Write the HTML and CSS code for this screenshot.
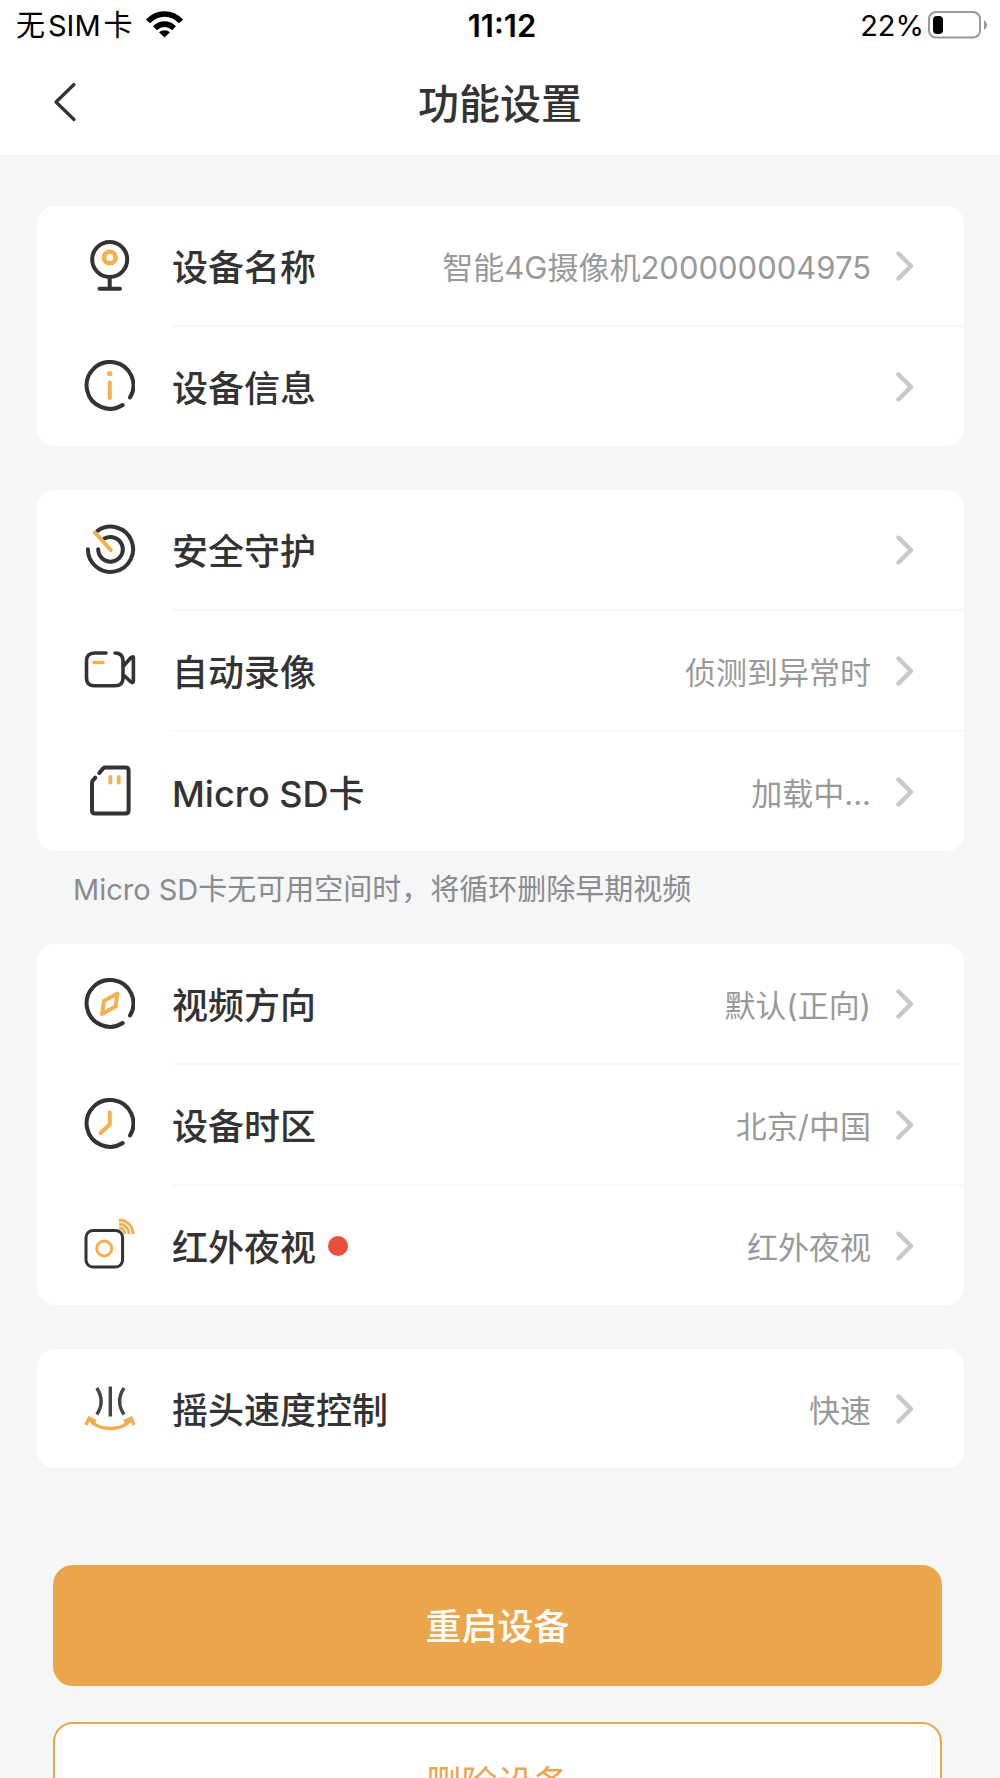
FILE: index.html
```html
<!DOCTYPE html>
<html lang="zh-CN">
<head>
<meta charset="utf-8">
<meta name="viewport" content="width=device-width, initial-scale=1">
<title>功能设置</title>
<link rel="stylesheet" href="styles.css">
</head>
<body>
<svg class="sprite" aria-hidden="true">
  <symbol id="chevron" viewBox="0 0 18 30"><path d="M2.5 2.5 15 15 2.5 27.5" fill="none" stroke="#c8c8c8" stroke-width="4.4" stroke-linecap="round" stroke-linejoin="round"/></symbol>
  <symbol id="open-ring" viewBox="0 0 51 51"><path d="M46 37.5A23.4 23.4 0 1 0 38.7 45" fill="none" stroke="#333" stroke-width="4" stroke-linecap="round"/></symbol>
</svg>
<div class="app">
  <header class="top">
    <div class="status">
      <div class="status-left">
        <span class="carrier"><span>无</span><span>SIM</span><span>卡</span></span>
        <svg class="wifi" viewBox="0 0 37 28" aria-hidden="true">
          <path d="M2 11.500C11 1.500 26 1.500 35 11.500M9 18.200C14.500 12.800 22.500 12.800 28 18.200" fill="none" stroke="#000" stroke-width="5.600"/>
          <path d="M13 22.200C16 19.500 21 19.500 24 22.200L18.500 27.600Z"/>
        </svg>
      </div>
      <time class="clock">11:12</time>
      <div class="status-right">
        <span>22%</span>
        <svg class="battery" viewBox="0 0 60 28" aria-hidden="true">
          <rect x="1" y="1" width="51" height="25.500" rx="7" fill="none" stroke="#999" stroke-width="2"/>
          <rect x="5" y="5" width="10" height="18" rx="4"/>
          <path d="M56 9Q59 11 59 14T56 19Z" fill="#999"/>
        </svg>
      </div>
    </div>
    <div class="nav">
      <button class="back" type="button" aria-label="返回">
        <svg viewBox="0 0 24 40" aria-hidden="true"><path d="M21 2.500 3 20 21 37.500" fill="none" stroke="#333" stroke-width="3.200" stroke-linecap="round" stroke-linejoin="round"/></svg>
      </button>
      <h1 class="title">功能设置</h1>
    </div>
  </header>

  <main class="content">
    <ul class="card">
      <li><a class="row" href="#name">
        <svg class="icon" viewBox="0 0 51 51" fill="none" stroke="#333" stroke-width="4" stroke-linecap="round"><circle cx="25.700" cy="19.500" r="17.500"/><path d="M25.700 37V48M15.500 48.700H36"/><circle cx="25.700" cy="17.500" r="5.800" stroke="#f5b04c" stroke-width="4.400"/></svg>
        <span class="cell"><span class="label">设备名称</span><span class="value">智能4G摄像机200000004975</span><svg class="chevron"><use href="#chevron"/></svg></span>
      </a></li>
      <li><a class="row" href="#info">
        <svg class="icon" viewBox="0 0 51 51"><use href="#open-ring"/><circle cx="25.800" cy="13.600" r="2.700" fill="#f5b04c"/><path d="M25.800 22.500V38" stroke="#f5b04c" stroke-width="4" stroke-linecap="round"/></svg>
        <span class="cell"><span class="label">设备信息</span><svg class="chevron"><use href="#chevron"/></svg></span>
      </a></li>
    </ul>

    <ul class="card">
      <li><a class="row" href="#guard">
        <svg class="icon" viewBox="0 0 51 51" fill="none" stroke="#333" stroke-width="4" stroke-linecap="round"><path d="M3.900 25.300A22.600 22.600 0 1 0 13.500 6.800M14.200 25.300A12.300 12.300 0 1 0 20.500 14.600"/><path d="M10.800 8.500 26.800 26" stroke="#f5b04c"/></svg>
        <span class="cell"><span class="label">安全守护</span><svg class="chevron"><use href="#chevron"/></svg></span>
      </a></li>
      <li><a class="row" href="#record">
        <svg class="icon" viewBox="0 0 51 51" fill="none" stroke="#333" stroke-width="3.600" stroke-linecap="round" stroke-linejoin="round"><path d="M22 9H10.500Q2.500 9 2.500 17V34Q2.500 41.800 10.500 41.800H31Q39 41.800 39 34V17Q39 9 31 9M40 21.500 46.500 14Q49.400 11.500 49.400 14V37Q49.400 39.500 46.500 37.500L40 31.500"/><path d="M10 18.500H19" stroke="#f5b04c" stroke-width="3.600"/></svg>
        <span class="cell"><span class="label">自动录像</span><span class="value">侦测到异常时</span><svg class="chevron"><use href="#chevron"/></svg></span>
      </a></li>
      <li><a class="row" href="#sd">
        <svg class="icon" viewBox="0 0 51 51" fill="none" stroke="#333" stroke-width="4" stroke-linecap="round" stroke-linejoin="round"><path d="M15.300 8 19 3.400Q20 2.500 21.500 2.500H41.500Q44.600 2.500 44.600 5.500V45.500Q44.600 48.600 41.500 48.600H11Q8 48.600 8 45.500V18Q8 16.500 9 15.300L11.300 12.700"/><path d="M26.300 12V17.500M34.700 12V17.500" stroke="#f5b04c" stroke-width="3.800"/></svg>
        <span class="cell"><span class="label">Micro SD卡</span><span class="value">加载中...</span><svg class="chevron"><use href="#chevron"/></svg></span>
      </a></li>
    </ul>
    <p class="note">Micro SD卡无可用空间时，将循环删除早期视频</p>

    <ul class="card">
      <li><a class="row" href="#direction">
        <svg class="icon" viewBox="0 0 51 51"><use href="#open-ring"/><path d="M33.500 15.500 20 23 18 36 31.500 28.500Z" fill="none" stroke="#f5b04c" stroke-width="4" stroke-linejoin="round"/></svg>
        <span class="cell"><span class="label">视频方向</span><span class="value">默认(正向)</span><svg class="chevron"><use href="#chevron"/></svg></span>
      </a></li>
      <li><a class="row" href="#timezone">
        <svg class="icon" viewBox="0 0 51 51"><use href="#open-ring"/><path d="M25.800 14.500V26.500L16.500 35" fill="none" stroke="#f5b04c" stroke-width="4" stroke-linecap="round" stroke-linejoin="round"/></svg>
        <span class="cell"><span class="label">设备时区</span><span class="value">北京/中国</span><svg class="chevron"><use href="#chevron"/></svg></span>
      </a></li>
      <li><a class="row" href="#night">
        <svg class="icon" viewBox="0 0 51 51" fill="none" stroke="#f5b04c"><rect x="2" y="11.500" width="36.600" height="36.600" rx="7" stroke="#333" stroke-width="3"/><circle cx="20.200" cy="29.500" r="7.500" stroke-width="3"/><path d="M35 1A14 14 0 0 1 49 15M35 5A10 10 0 0 1 45 15M35 9A6 6 0 0 1 41 15" stroke-width="2.800"/></svg>
        <span class="cell"><span class="label">红外夜视</span><span class="dot"></span><span class="value">红外夜视</span><svg class="chevron"><use href="#chevron"/></svg></span>
      </a></li>
    </ul>

    <ul class="card">
      <li><a class="row" href="#speed">
        <svg class="icon" viewBox="0 0 51 51" fill="none" stroke="#444" stroke-width="3.400"><path d="M26.300 3.500V33.500M12.800 5Q21.500 18.500 12.800 31.500M40 5Q31.200 18.500 40 31.500"/><path d="M5.500 36.500C15 48.500 37.500 48.500 47 36.500M1.800 42 5.200 35.200 12 38.500M50 42 47 35.200 40 38.500" stroke="#f2ac4b" stroke-width="3.400"/></svg>
        <span class="cell"><span class="label">摇头速度控制</span><span class="value">快速</span><svg class="chevron"><use href="#chevron"/></svg></span>
      </a></li>
    </ul>

    <div class="actions">
      <button class="btn btn-primary" type="button">重启设备</button>
      <button class="btn btn-outline" type="button">删除设备</button>
    </div>
  </main>
</div>
</body>
</html>
```
FILE: styles.css
```css
* { box-sizing: border-box; }

body {
  margin: 0;
  background: #f4f6f8;
  color: #333;
  font-family: Inter, "Noto Sans CJK SC", sans-serif;
}

.sprite { display: none; }

.app {
  display: flex;
  flex-direction: column;
  height: 100vh;
}

.top { background: #fff; flex: none; }

.status {
  display: grid;
  grid-template-columns: 1fr auto 1fr;
  align-items: center;
  height: 52px;
  padding: 0 12px 0 16px;
  color: #000;
  font-size: 29px;
  line-height: 52px;
}
.status-left { display: flex; align-items: center; gap: 13px; }
.carrier { display: flex; gap: 3px; }
.status-right { display: flex; align-items: center; justify-content: flex-end; gap: 4px; }
.clock { font-size: 31px; font-weight: 600; }
.wifi { width: 37px; height: 28px; margin-bottom: 4px; }
.battery { width: 60px; height: 28px; margin-bottom: 2px; }

.nav {
  display: grid;
  grid-template-columns: 1fr auto 1fr;
  align-items: center;
  height: 103px;
  padding: 0 53px 4px;
}
.back {
  display: flex;
  justify-self: start;
  padding: 0;
  border: 0;
  background: none;
}
.back svg { width: 24px; height: 40px; }
.title {
  margin: 0;
  padding-top: 4px;
  font-size: 41px;
  font-weight: 500;
  line-height: 60px;
}

.content {
  flex: 1;
  min-height: 0;
  padding: 51px 36px 36px 37px;
  overflow-y: auto;
  scrollbar-width: none;
}

.card {
  margin: 0 0 44px;
  padding: 0;
  border-radius: 18px;
  background: #fff;
  list-style: none;
}
.row {
  display: flex;
  align-items: stretch;
  gap: 37px;
  padding-left: 47px;
  color: inherit;
  text-decoration: none;
}
.icon { flex: none; align-self: center; width: 51px; height: 51px; overflow: visible; }
.cell {
  display: flex;
  flex: 1;
  align-items: center;
  height: 119px;
  padding-right: 50px;
}
li + li .cell { height: 121px; border-top: 2px solid #f8f8f9; }
.label, .value { padding-top: 4px; line-height: 54px; }
.label { font-size: 36px; font-weight: 500; }
.value {
  margin-left: auto;
  color: #999;
  font-size: 31px;
}
.chevron { flex: none; width: 18px; height: 30px; margin-left: auto; }
.value + .chevron { margin-left: 25px; }
.dot {
  width: 20px;
  height: 20px;
  margin-left: 12px;
  border-radius: 50%;
  background: #e94f3d;
}

.note {
  margin: -44px 0 0;
  padding: 17px 36px 32px;
  color: #8b8b8d;
  font-size: 29px;
  line-height: 44px;
}

.actions {
  display: flex;
  flex-direction: column;
  gap: 36px;
  padding: 53px 22px 0 16px;
}
.btn {
  height: 121px;
  padding: 0 0 4px;
  border: 2px solid #eba64c;
  border-radius: 20px;
  font: inherit;
  font-size: 36px;
}
.btn-primary { background: #eba64c; color: #fff; font-weight: 500; }
.btn-outline { background: #fff; color: #eba64c; }
```
